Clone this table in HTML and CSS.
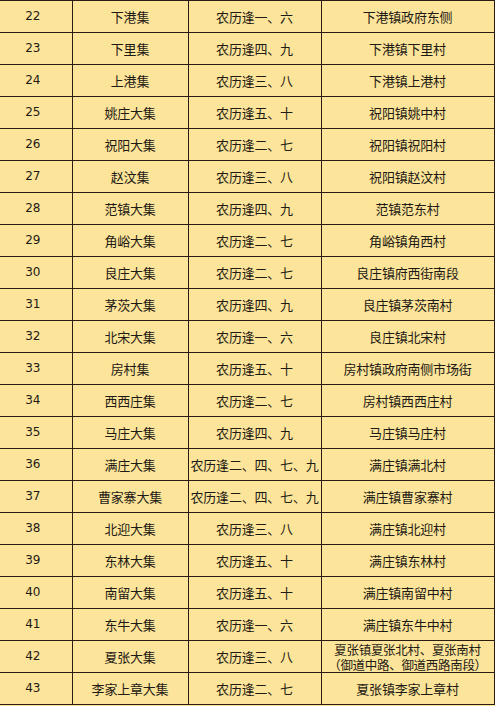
FILE: index.html
```html
<!DOCTYPE html>
<html lang="zh">
<head>
<meta charset="utf-8">
<link rel="stylesheet" href="styles.css">
</head>
<body>
<table class="market">
<colgroup>
<col class="c1"><col class="c2"><col class="c3"><col class="c4">
</colgroup>
<tbody>
<tr><td class="num">22</td><td>下港集</td><td>农历逢一、六</td><td>下港镇政府东侧</td></tr>
<tr><td class="num">23</td><td>下里集</td><td>农历逢四、九</td><td>下港镇下里村</td></tr>
<tr><td class="num">24</td><td>上港集</td><td>农历逢三、八</td><td>下港镇上港村</td></tr>
<tr><td class="num">25</td><td>姚庄大集</td><td>农历逢五、十</td><td>祝阳镇姚中村</td></tr>
<tr><td class="num">26</td><td>祝阳大集</td><td>农历逢二、七</td><td>祝阳镇祝阳村</td></tr>
<tr><td class="num">27</td><td>赵汶集</td><td>农历逢三、八</td><td>祝阳镇赵汶村</td></tr>
<tr><td class="num">28</td><td>范镇大集</td><td>农历逢四、九</td><td>范镇范东村</td></tr>
<tr><td class="num">29</td><td>角峪大集</td><td>农历逢二、七</td><td>角峪镇角西村</td></tr>
<tr><td class="num">30</td><td>良庄大集</td><td>农历逢二、七</td><td>良庄镇府西街南段</td></tr>
<tr><td class="num">31</td><td>茅茨大集</td><td>农历逢四、九</td><td>良庄镇茅茨南村</td></tr>
<tr><td class="num">32</td><td>北宋大集</td><td>农历逢一、六</td><td>良庄镇北宋村</td></tr>
<tr><td class="num">33</td><td>房村集</td><td>农历逢五、十</td><td>房村镇政府南侧市场街</td></tr>
<tr><td class="num">34</td><td>西西庄集</td><td>农历逢二、七</td><td>房村镇西西庄村</td></tr>
<tr><td class="num">35</td><td>马庄大集</td><td>农历逢四、九</td><td>马庄镇马庄村</td></tr>
<tr><td class="num">36</td><td>满庄大集</td><td>农历逢二、四、七、九</td><td>满庄镇满北村</td></tr>
<tr><td class="num">37</td><td>曹家寨大集</td><td>农历逢二、四、七、九</td><td>满庄镇曹家寨村</td></tr>
<tr><td class="num">38</td><td>北迎大集</td><td>农历逢三、八</td><td>满庄镇北迎村</td></tr>
<tr><td class="num">39</td><td>东林大集</td><td>农历逢五、十</td><td>满庄镇东林村</td></tr>
<tr><td class="num">40</td><td>南留大集</td><td>农历逢五、十</td><td>满庄镇南留中村</td></tr>
<tr><td class="num">41</td><td>东牛大集</td><td>农历逢一、六</td><td>满庄镇东牛中村</td></tr>
<tr><td class="num">42</td><td>夏张大集</td><td>农历逢三、八</td><td class="two">夏张镇夏张北村、夏张南村<br>（御道中路、御道西路南段）</td></tr>
<tr><td class="num">43</td><td>李家上章大集</td><td>农历逢二、七</td><td>夏张镇李家上章村</td></tr>
</tbody>
</table>
</body>
</html>
```

FILE: styles.css
```css
html, body {
  margin: 0;
  padding: 0;
  background: #fce49a;
}
.market {
  border-collapse: collapse;
  table-layout: fixed;
  width: 494px;
  font-family: "Noto Sans CJK SC", "Liberation Sans", sans-serif;
  font-size: 13px;
  color: #1e1a14;
  background: #fce49a;
}
.c1 { width: 72px; }
.c2 { width: 116px; }
.c3 { width: 133px; }
.c4 { width: 173px; }
.market tr {
  height: 32px;
}
.market td {
  border: 1.5px solid #2a1c12;
  text-align: center;
  vertical-align: middle;
  padding: 0;
  line-height: 15px;
  white-space: nowrap;
  letter-spacing: -0.2px;
}
.market td:first-child {
  border-left: none;
}
.market td.num {
  font-family: "DejaVu Sans", sans-serif;
  font-size: 12px;
  padding-right: 6px;
}
.market td.two {
  font-size: 12.5px;
  line-height: 15px;
  letter-spacing: -0.3px;
}
```
